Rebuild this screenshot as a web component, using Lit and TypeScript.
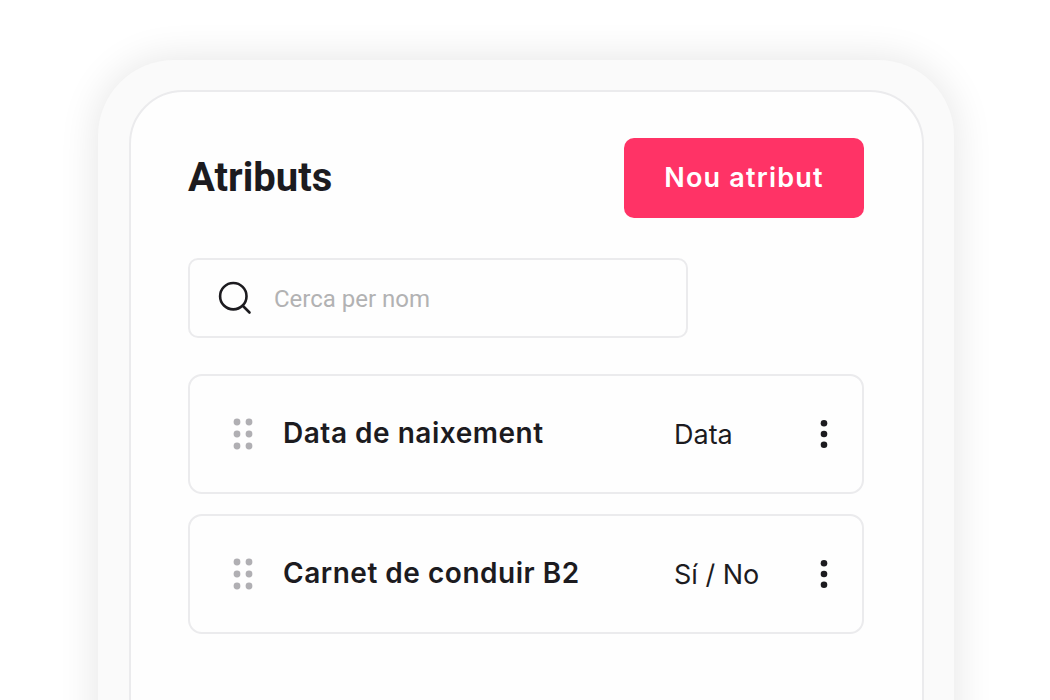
import { LitElement, html, css } from "lit";
import { customElement } from "lit/decorators.js";

@customElement("app-root")
export class AppRoot extends LitElement {
  static styles = css`
    :host { display: block; width: 1050px; height: 700px; overflow: hidden; background: #fff; font-family: Inter, sans-serif; color: #1c1b1f; }
    .page { box-sizing: border-box; height: 700px; padding: 60px 96px 0 98px; overflow: hidden; }
    .frame { box-sizing: border-box; height: 760px; padding: 30px 30px 0 31px; border-radius: 76px; background: #fafafa; box-shadow: 0 0 40px rgba(0,0,0,0.11); }
    .screen { box-sizing: border-box; height: 730px; padding: 46px 58px 0 57px; border: 2px solid #ebebed; border-radius: 54px; background: #fefefe; }
    .head { display: flex; justify-content: space-between; align-items: center; height: 80px; }
    h1 { margin: 0; font: 700 40px/48px Roboto, sans-serif; color: #1c1b1f; }
    .btn { width: 240px; height: 80px; border: 0; border-radius: 10px; background: #ff3366; color: #fff; font: 600 27px/32px Inter, sans-serif; letter-spacing: 1.2px; padding: 0; }
    .search { box-sizing: border-box; width: 500px; height: 80px; margin-top: 40px; padding-left: 28px; display: flex; align-items: center; gap: 22px; border: 2px solid #ebebed; border-radius: 10px; color: #b2b2b3; font: 400 24px/30px Roboto, sans-serif; }
    .search svg { display: block; flex: none; }
    .search span { padding-top: 2px; }
    .list { display: flex; flex-direction: column; gap: 20px; margin-top: 36px; }
    .row { box-sizing: border-box; height: 120px; display: flex; align-items: center; padding-left: 43px; border: 2px solid #ebebed; border-radius: 14px; }
    .grip { flex: none; display: block; }
    .name { width: 391px; margin-left: 30px; padding-bottom: 2px; font: 600 28px/36px Inter, sans-serif; letter-spacing: 0.52px; color: #1c1b1f; }
    .type { width: 145px; padding-top: 1px; font: 400 27px/36px Inter, sans-serif; color: #1c1b1f; }
    .more { flex: none; display: block; }
  `;

  private grip() {
    return html`<svg class="grip" width="20" height="32" viewBox="0 0 20 32" fill="#b0afb3">
      ${[4, 16, 28].map((y) => html`<svg x="0" y="0" overflow="visible"><circle cx="4" cy=${y} r="3.4"></circle><circle cx="16" cy=${y} r="3.4"></circle></svg>`)}
    </svg>`;
  }

  private more() {
    return html`<svg class="more" width="10" height="30" viewBox="0 0 10 30" fill="#1c1b1f">
      <circle cx="5" cy="4.2" r="3.3"></circle><circle cx="5" cy="15" r="3.3"></circle><circle cx="5" cy="25.8" r="3.3"></circle>
    </svg>`;
  }

  private row(name: string, type: string) {
    return html`<div class="row">${this.grip()}<div class="name">${name}</div><div class="type">${type}</div>${this.more()}</div>`;
  }

  render() {
    return html`<div class="page"><div class="frame"><div class="screen">
      <div class="head"><h1>Atributs</h1><button class="btn">Nou atribut</button></div>
      <div class="search">
        <svg width="34" height="34" viewBox="0 0 34 34" fill="none" stroke="#1c1b1f" stroke-width="2.6" stroke-linecap="round">
          <circle cx="15.3" cy="15.2" r="13.2"></circle><path d="M25 25 L31.5 31.5"></path>
        </svg>
        <span>Cerca per nom</span>
      </div>
      <div class="list">
        ${this.row("Data de naixement", "Data")}
        ${this.row("Carnet de conduir B2", "Sí / No")}
      </div>
    </div></div></div>`;
  }
}
